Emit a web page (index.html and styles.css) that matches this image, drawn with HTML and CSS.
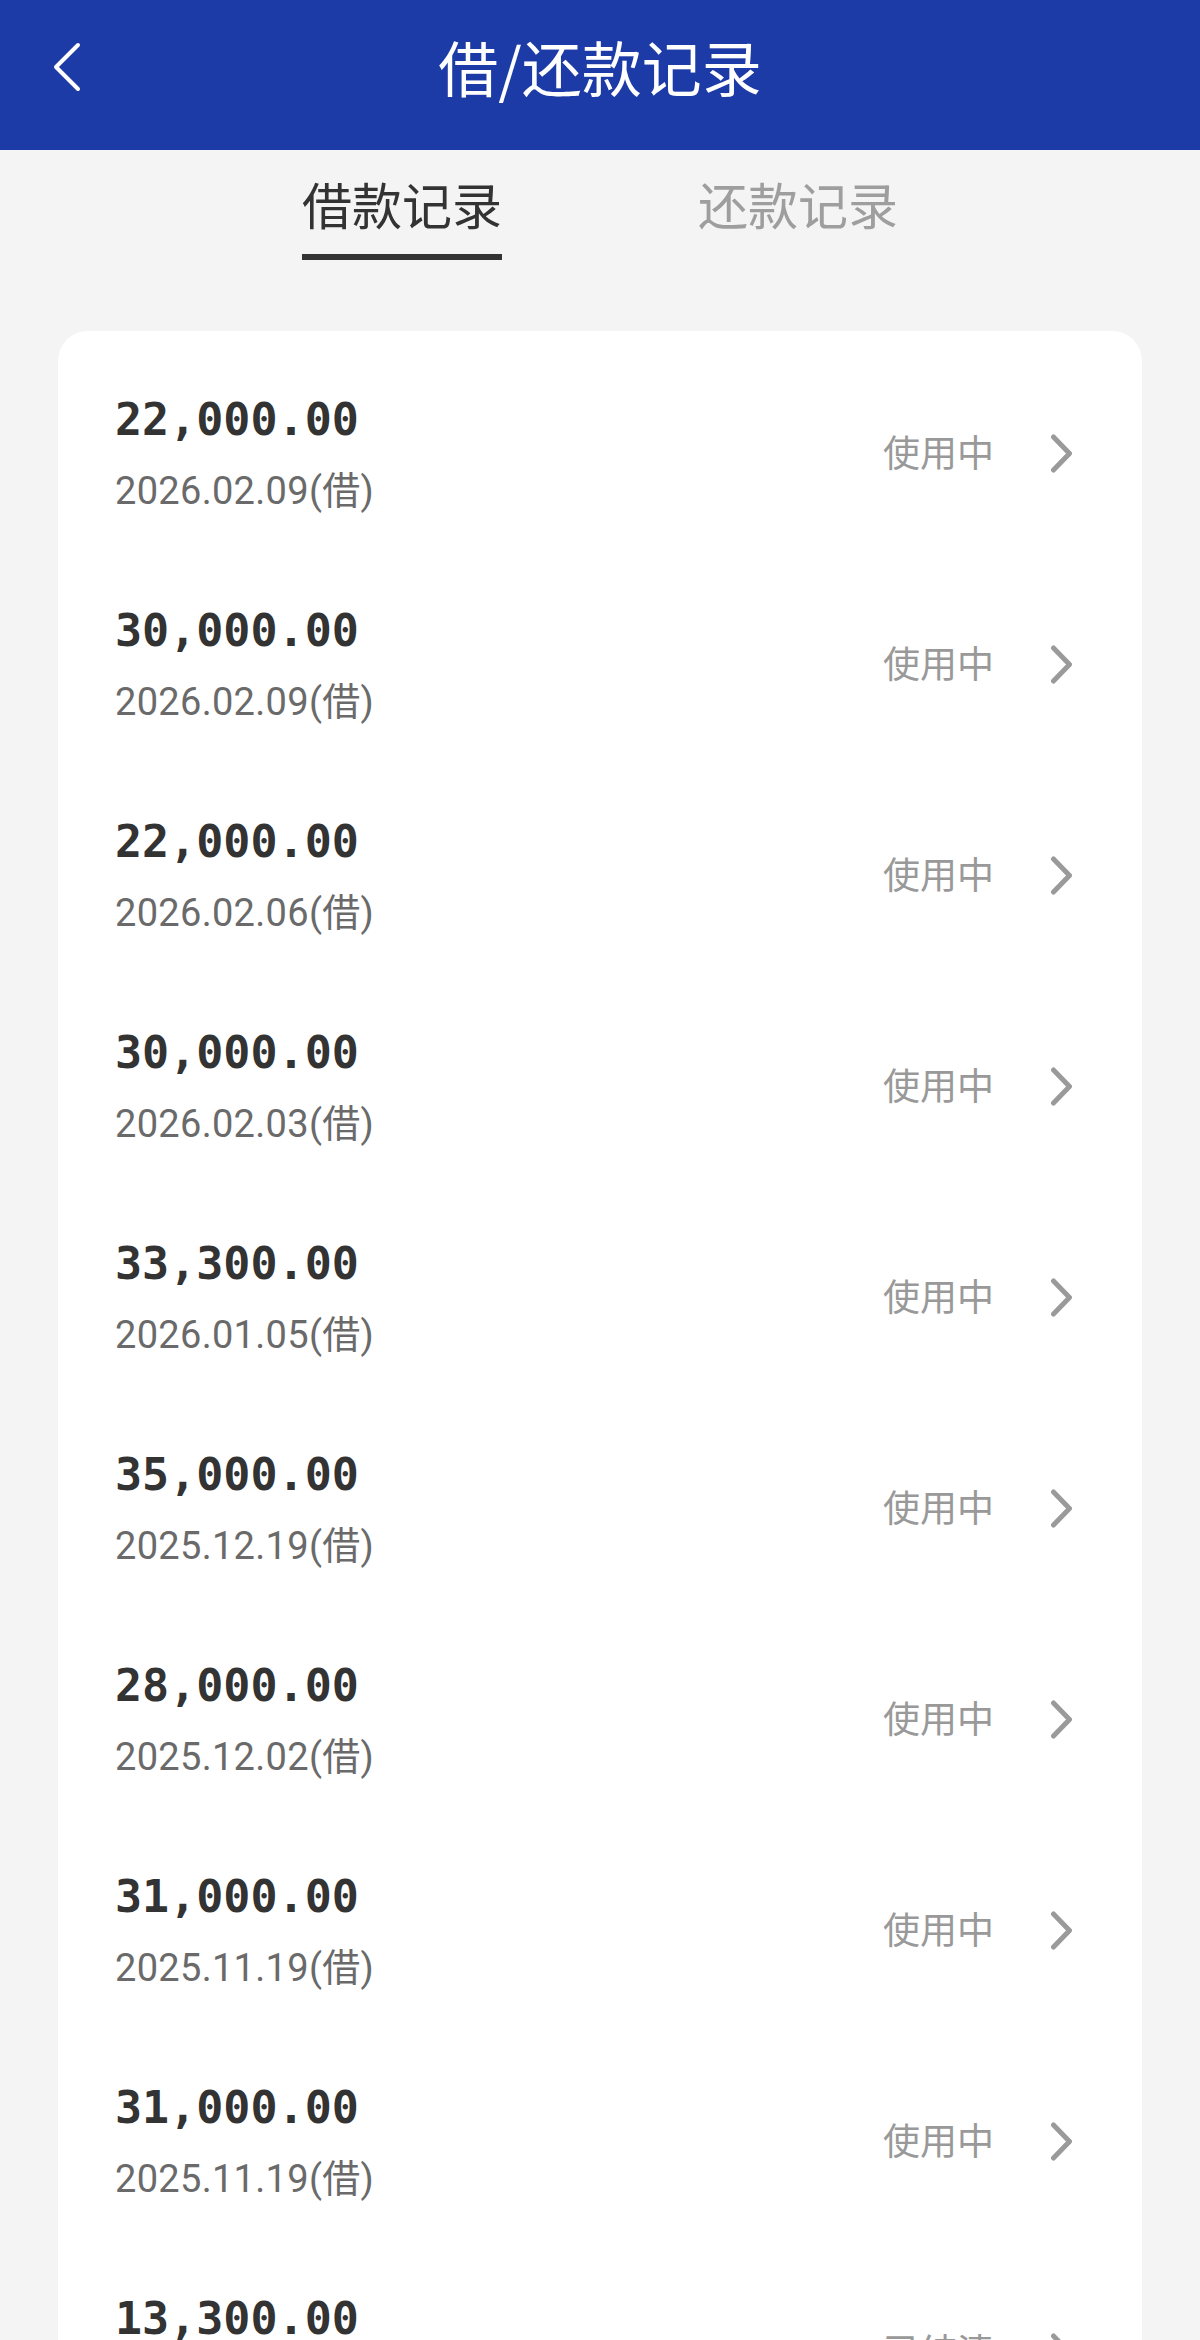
FILE: index.html
```html
<!DOCTYPE html>
<html lang="zh-CN">
<head>
    <meta charset="UTF-8">
    <meta name="viewport" content="width=device-width, initial-scale=1.0">
    <title>借/还款记录</title>
    <link rel="stylesheet" href="styles.css">
</head>
<body>
    <header class="topbar">
        <a class="back" href="#">
            <svg width="30" height="52" viewBox="0 0 30 52">
                <polyline points="25,3 3,25 25,47" fill="none" stroke="#fff" stroke-width="4" stroke-linecap="round" stroke-linejoin="round"/>
            </svg>
        </a>
        <h1 class="title">借/还款记录</h1>
    </header>

    <nav class="tabs">
        <div class="tab active">借款记录</div>
        <div class="tab">还款记录</div>
    </nav>

    <div class="card">
        <div class="row">
            <div class="info">
                <div class="amount">22,000.00</div>
                <div class="date">2026.02.09(借)</div>
            </div>
            <div class="status">
                <span class="status-text">使用中</span>
                <svg class="arrow" width="24" height="40" viewBox="0 0 24 40"><polyline points="3.5,3 19.5,19.5 3.5,36"/></svg>
            </div>
        </div>
        <div class="row">
            <div class="info">
                <div class="amount">30,000.00</div>
                <div class="date">2026.02.09(借)</div>
            </div>
            <div class="status">
                <span class="status-text">使用中</span>
                <svg class="arrow" width="24" height="40" viewBox="0 0 24 40"><polyline points="3.5,3 19.5,19.5 3.5,36"/></svg>
            </div>
        </div>
        <div class="row">
            <div class="info">
                <div class="amount">22,000.00</div>
                <div class="date">2026.02.06(借)</div>
            </div>
            <div class="status">
                <span class="status-text">使用中</span>
                <svg class="arrow" width="24" height="40" viewBox="0 0 24 40"><polyline points="3.5,3 19.5,19.5 3.5,36"/></svg>
            </div>
        </div>
        <div class="row">
            <div class="info">
                <div class="amount">30,000.00</div>
                <div class="date">2026.02.03(借)</div>
            </div>
            <div class="status">
                <span class="status-text">使用中</span>
                <svg class="arrow" width="24" height="40" viewBox="0 0 24 40"><polyline points="3.5,3 19.5,19.5 3.5,36"/></svg>
            </div>
        </div>
        <div class="row">
            <div class="info">
                <div class="amount">33,300.00</div>
                <div class="date">2026.01.05(借)</div>
            </div>
            <div class="status">
                <span class="status-text">使用中</span>
                <svg class="arrow" width="24" height="40" viewBox="0 0 24 40"><polyline points="3.5,3 19.5,19.5 3.5,36"/></svg>
            </div>
        </div>
        <div class="row">
            <div class="info">
                <div class="amount">35,000.00</div>
                <div class="date">2025.12.19(借)</div>
            </div>
            <div class="status">
                <span class="status-text">使用中</span>
                <svg class="arrow" width="24" height="40" viewBox="0 0 24 40"><polyline points="3.5,3 19.5,19.5 3.5,36"/></svg>
            </div>
        </div>
        <div class="row">
            <div class="info">
                <div class="amount">28,000.00</div>
                <div class="date">2025.12.02(借)</div>
            </div>
            <div class="status">
                <span class="status-text">使用中</span>
                <svg class="arrow" width="24" height="40" viewBox="0 0 24 40"><polyline points="3.5,3 19.5,19.5 3.5,36"/></svg>
            </div>
        </div>
        <div class="row">
            <div class="info">
                <div class="amount">31,000.00</div>
                <div class="date">2025.11.19(借)</div>
            </div>
            <div class="status">
                <span class="status-text">使用中</span>
                <svg class="arrow" width="24" height="40" viewBox="0 0 24 40"><polyline points="3.5,3 19.5,19.5 3.5,36"/></svg>
            </div>
        </div>
        <div class="row">
            <div class="info">
                <div class="amount">31,000.00</div>
                <div class="date">2025.11.19(借)</div>
            </div>
            <div class="status">
                <span class="status-text">使用中</span>
                <svg class="arrow" width="24" height="40" viewBox="0 0 24 40"><polyline points="3.5,3 19.5,19.5 3.5,36"/></svg>
            </div>
        </div>
        <div class="row">
            <div class="info">
                <div class="amount">13,300.00</div>
                <div class="date">2025.11.03(借)</div>
            </div>
            <div class="status">
                <span class="status-text">已结清</span>
                <svg class="arrow" width="24" height="40" viewBox="0 0 24 40"><polyline points="3.5,3 19.5,19.5 3.5,36"/></svg>
            </div>
        </div>
    </div>
</body>
</html>
```

FILE: styles.css
```css
body {
    margin: 0;
    padding: 0;
    background-color: #f4f4f4;
    font-family: "Noto Sans CJK SC", "Noto Sans", sans-serif;
    color: #333;
}
.topbar {
    position: relative;
    height: 150px;
    box-sizing: border-box;
    padding-bottom: 18px;
    background-color: #1c3ba6;
    display: flex;
    align-items: center;
    justify-content: center;
}
.back {
    position: absolute;
    left: 53px;
    top: 42px;
    display: block;
    line-height: 0;
}
.title {
    margin: 0;
    font-size: 60px;
    font-weight: normal;
    line-height: 60px;
    color: #fff;
}
.tabs {
    display: flex;
    justify-content: center;
    gap: 196px;
    padding-top: 28px;
}
.tab {
    width: 200px;
    font-size: 50px;
    line-height: 50px;
    color: #9e9e9e;
    padding-bottom: 26px;
    border-bottom: 6px solid transparent;
}
.tab.active {
    color: #333;
    border-bottom-color: #333;
}
.card {
    margin: 71px 58px 0;
    padding: 18px 68px 40px 57px;
    background-color: #fff;
    border-radius: 30px;
}
.row {
    display: flex;
    justify-content: space-between;
    align-items: center;
    padding: 45px 0 46px;
}
.amount {
    font-family: "DejaVu Sans Mono", monospace;
    font-weight: bold;
    font-size: 45px;
    line-height: 52px;
    color: #333;
}
.date {
    margin-top: 22px;
    font-family: Roboto, "Noto Sans CJK SC", sans-serif;
    font-size: 38px;
    line-height: 46px;
    letter-spacing: 0.3px;
    color: #6a6a6a;
}
.status {
    display: flex;
    align-items: center;
    gap: 56px;
}
.status-text {
    font-size: 37px;
    line-height: 37px;
    padding-bottom: 5px;
    color: #999;
}
.arrow polyline {
    fill: none;
    stroke: #9a9a9a;
    stroke-width: 5;
    stroke-linecap: round;
    stroke-linejoin: round;
}
```
